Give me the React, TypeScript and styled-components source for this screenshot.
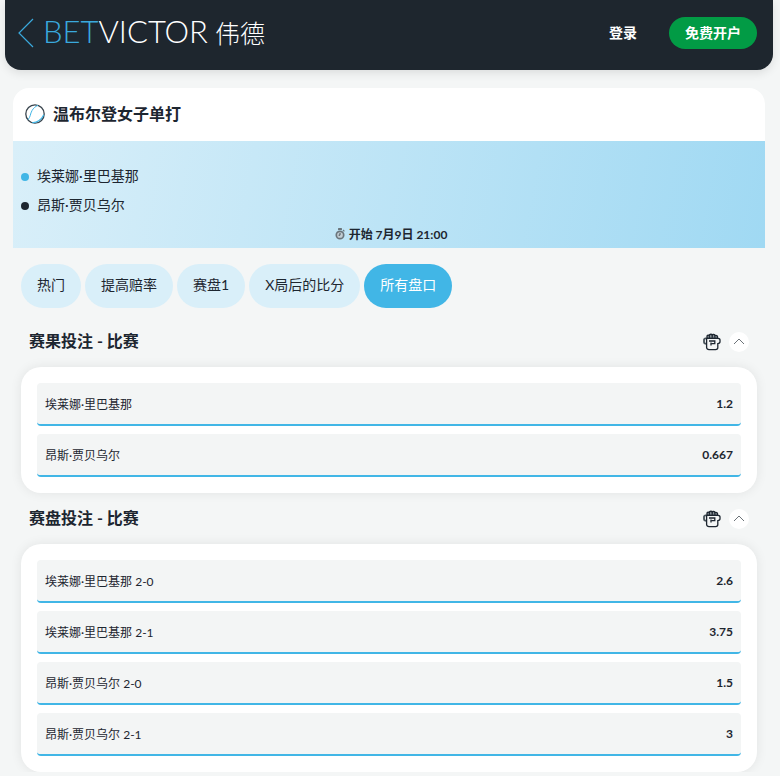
import React from 'react'
import styled, { createGlobalStyle } from 'styled-components'

const FONT = `Lato, "Noto Sans CJK SC", sans-serif`

const GlobalStyle = createGlobalStyle`
  html, body {
    margin: 0;
    padding: 0;
    background: #f4f6f6;
    font-family: ${FONT};
    color: #1d2630;
  }
`

const TennisIcon = styled(({ className }: { className?: string }) => (
  <svg className={className} width="20" height="20" viewBox="0 0 20 20" fill="none">
    <circle cx="10" cy="10" r="9.2" stroke="#39444d" strokeWidth="1.3" />
    <path d="M3 15.7C5.6 13 5.2 9.6 7 6.6 8.4 4.2 10.4 2.4 13 1.3" stroke="#41b6e6" strokeWidth="1" />
    <path d="M7.3 18.6C11.6 19 16.4 16 18.8 10.7" stroke="#41b6e6" strokeWidth="1.2" />
  </svg>
))`
  margin-top: 3px;
`

const WatchIcon = () => (
  <svg width="10" height="12" viewBox="0 0 10 12" fill="none">
    <rect x="3" y="0" width="4" height="2" rx="0.6" fill="#6a757c" />
    <circle cx="5" cy="7" r="3.7" fill="#c3ced4" stroke="#6a757c" strokeWidth="1.7" />
    <path d="M5 5V7.2H3.6" stroke="#49545b" strokeWidth="1" />
    <path d="M8 2 9.4 3.4" stroke="#6a757c" strokeWidth="1.2" />
  </svg>
)

const CashIcon = () => (
  <svg width="18" height="18" viewBox="0 0 18 18" fill="none" stroke="#1d2630" strokeWidth="1.3">
    <path d="M4 5.4V3.2C4 2 6 1.8 6.4 3V2.2C6.4.9 8.9.9 9.2 2.2 9.6 1 11.8 1.2 11.9 2.6 13 2 14.6 2.6 14.6 4V5.4Z" fill="#8b949a" />
    <path d="M6.4 3V5.2M9.2 2.2V5.2M11.9 2.6V5.2" strokeWidth="1" />
    <path d="M3.6 5.4H2.6C1.6 5.4 1 6 1 6.8V9C1 10.2 2.4 10.8 3.6 10.8" stroke="#4a555c" strokeWidth="1.8" />
    <path d="M3.6 5.4H14.8C16.2 5.4 17 6 17 7V8.8C17 10 15.8 10.6 14.8 10.6V14.8C14.8 16 13.8 16.6 12.6 16.6H6C4.6 16.6 3.6 15.8 3.6 14.6Z" />
    <path d="M6 8H11.8V10.6H8.2" />
    <path d="M8 9.4V12.6" />
  </svg>
)

const ChevronUp = () => (
  <svg width="12" height="7" viewBox="0 0 12 7" fill="none">
    <path d="M1 6 6 1 11 6" stroke="#6d7479" strokeWidth="1" />
  </svg>
)

const Header = styled.header`
  display: flex;
  align-items: center;
  justify-content: space-between;
  height: 70px;
  margin: 0 7px 0 5px;
  padding: 0 16px 4px 13px;
  box-sizing: border-box;
  background: #1e262e;
  border-radius: 0 0 16px 16px;
  box-shadow: 0 3px 10px rgba(0, 0, 0, 0.1);
`

const Brand = styled.div`
  display: flex;
  align-items: center;
`

const BackArrow = styled.svg`
  margin-right: 9px;
`

const Logo = styled.span`
  padding-bottom: 4px;
  font-size: 31px;
  font-weight: 300;
  color: #fff;
  white-space: nowrap;
`

const LogoBet = styled.span`
  color: #3aa9dd;
`

const LogoCn = styled.span`
  margin-left: 7px;
  font-size: 25px;
`

const HeaderActions = styled.div`
  display: flex;
  align-items: center;
  gap: 32px;
`

const Login = styled.span`
  padding-bottom: 2px;
  font-size: 14px;
  font-weight: 700;
  color: #fff;
`

const Signup = styled.span`
  display: flex;
  align-items: center;
  justify-content: center;
  width: 88px;
  height: 32px;
  padding-bottom: 2px;
  box-sizing: border-box;
  border-radius: 16px;
  background: #029b45;
  color: #fff;
  font-size: 14px;
  font-weight: 700;
`

const EventCard = styled.section`
  margin: 18px 15px 0 13px;
`

const EventTitle = styled.div`
  display: flex;
  align-items: center;
  gap: 8px;
  height: 53px;
  padding: 0 12px 4px;
  box-sizing: border-box;
  background: #fff;
  border-radius: 16px 16px 0 0;
  font-size: 16px;
  font-weight: 700;
`

const Banner = styled.div`
  height: 107px;
  padding: 19px 8px 0;
  box-sizing: border-box;
  background: linear-gradient(100deg, #d9eff9 0%, #a0d9f3 100%);
`

const Player = styled.div`
  display: flex;
  align-items: center;
  gap: 8px;
  height: 29px;
  font-size: 14px;
`

const Dot = styled.span<{ $color: string }>`
  width: 8px;
  height: 8px;
  margin-top: 5px;
  border-radius: 50%;
  background: ${p => p.$color};
`

const StartTime = styled.div`
  display: flex;
  align-items: center;
  justify-content: center;
  gap: 4px;
  margin-top: 7px;
  padding-left: 4px;
  font-size: 12px;
  font-weight: 700;
`

const Tabs = styled.nav`
  display: flex;
  gap: 4px;
  margin: 16px 21px 8px;
`

const Tab = styled.span<{ $active?: boolean }>`
  display: flex;
  align-items: center;
  height: 44px;
  padding: 0 16px 4px;
  box-sizing: border-box;
  border-radius: 22px;
  font-size: 14px;
  background: ${p => (p.$active ? '#41b6e6' : '#d9eff9')};
  color: ${p => (p.$active ? '#fff' : '#1d2630')};
`

const Market = styled.section`
  margin: 0 23px 0 21px;
`

const MarketHead = styled.div`
  display: flex;
  align-items: center;
  justify-content: space-between;
  height: 51px;
  padding: 0 8px;
  box-sizing: border-box;
`

const MarketTitle = styled.h2`
  margin: 0;
  padding-bottom: 4px;
  font-size: 16px;
  font-weight: 700;
`

const MarketTools = styled.div`
  display: flex;
  align-items: center;
  gap: 8px;
`

const Collapse = styled.span`
  display: flex;
  align-items: center;
  justify-content: center;
  width: 20px;
  height: 20px;
  border-radius: 50%;
  background: #fff;
`

const MarketBody = styled.div`
  display: flex;
  flex-direction: column;
  gap: 8px;
  padding: 16px;
  background: #fff;
  border-radius: 20px;
  box-shadow: 0 0 12px rgba(0, 0, 0, 0.08);
`

const Row = styled.div`
  display: flex;
  align-items: center;
  justify-content: space-between;
  height: 43px;
  padding: 0 8px;
  box-sizing: border-box;
  background: #f3f5f5;
  border-bottom: 2px solid #41b6e6;
  border-radius: 4px;
  font-size: 12px;
`

const Odds = styled.span`
  font-weight: 700;
`

const TABS = ['热门', '提高赔率', '赛盘1', 'X局后的比分', '所有盘口']

const MARKETS = [
  {
    title: '赛果投注 - 比赛',
    rows: [
      ['埃莱娜·里巴基那', '1.2'],
      ['昂斯·贾贝乌尔', '0.667'],
    ],
  },
  {
    title: '赛盘投注 - 比赛',
    rows: [
      ['埃莱娜·里巴基那 2-0', '2.6'],
      ['埃莱娜·里巴基那 2-1', '3.75'],
      ['昂斯·贾贝乌尔 2-0', '1.5'],
      ['昂斯·贾贝乌尔 2-1', '3'],
    ],
  },
]

const App: React.FC = () => (
  <>
    <GlobalStyle />
    <Header>
      <Brand>
        <BackArrow width="16" height="30" viewBox="0 0 16 30" fill="none">
          <path d="M15 1 1 15 15 29" stroke="#3aa9dd" strokeWidth="1.2" />
        </BackArrow>
        <Logo>
          <LogoBet>BET</LogoBet>VICTOR<LogoCn>伟德</LogoCn>
        </Logo>
      </Brand>
      <HeaderActions>
        <Login>登录</Login>
        <Signup>免费开户</Signup>
      </HeaderActions>
    </Header>
    <EventCard>
      <EventTitle>
        <TennisIcon />
        温布尔登女子单打
      </EventTitle>
      <Banner>
        <Player>
          <Dot $color="#41b6e6" />
          埃莱娜·里巴基那
        </Player>
        <Player>
          <Dot $color="#1d2630" />
          昂斯·贾贝乌尔
        </Player>
        <StartTime>
          <WatchIcon />
          开始 7月9日 21:00
        </StartTime>
      </Banner>
    </EventCard>
    <Tabs>
      {TABS.map((tab, index) => (
        <Tab key={tab} $active={index === TABS.length - 1}>
          {tab}
        </Tab>
      ))}
    </Tabs>
    {MARKETS.map(market => (
      <Market key={market.title}>
        <MarketHead>
          <MarketTitle>{market.title}</MarketTitle>
          <MarketTools>
            <CashIcon />
            <Collapse>
              <ChevronUp />
            </Collapse>
          </MarketTools>
        </MarketHead>
        <MarketBody>
          {market.rows.map(([name, odds]) => (
            <Row key={name}>
              <span>{name}</span>
              <Odds>{odds}</Odds>
            </Row>
          ))}
        </MarketBody>
      </Market>
    ))}
  </>
)

export default App
